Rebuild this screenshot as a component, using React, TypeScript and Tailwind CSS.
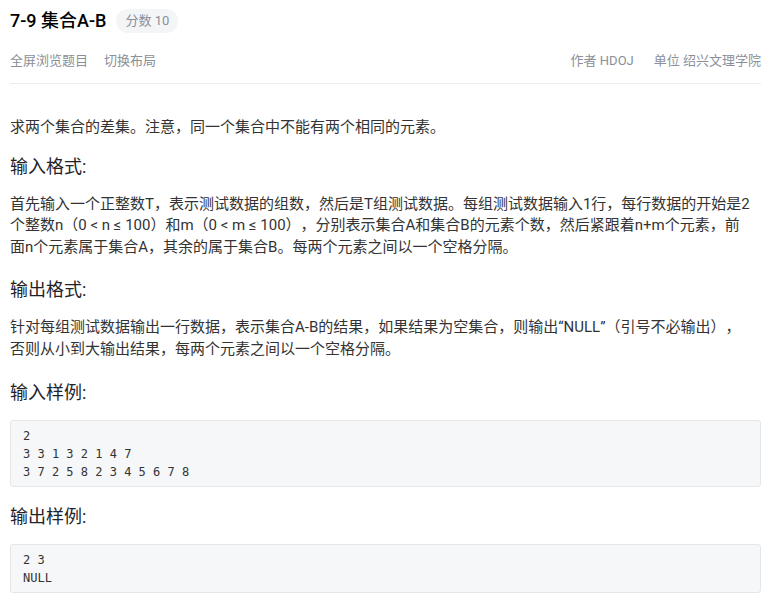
const sans = "font-['Roboto','Noto_Sans_CJK_SC',sans-serif]";

function Heading({ children, className }: { children: React.ReactNode; className: string }) {
  return (
    <h3 className={`text-[18px] leading-[26px] font-normal text-[#1f2329] mb-[14px] ${className}`}>
      {children}
    </h3>
  );
}

function Sample({ lines }: { lines: string[] }) {
  return (
    <pre className="bg-[#f6f7f9] border border-[#e5e6e8] rounded-[3px] px-[12px] py-[5.5px] font-['DejaVu_Sans_Mono',monospace] text-[12px] leading-[18px] text-[#333]">
      {lines.join("\n")}
    </pre>
  );
}

export default function App() {
  return (
    <div className={`${sans} bg-white min-h-screen pl-[10px] pr-[7px] text-[#333] [text-spacing-trim:space-all]`}>
      {/* Header */}
      <div className="flex items-center gap-[10px] pt-[9px]">
        <h1 className="text-[18px] leading-[24px] font-medium text-black">7-9 集合A-B</h1>
        <span className="bg-[#f4f5f7] rounded-full px-[9px] h-[24px] flex items-center text-[13px] text-[#8a8f99]">分数 10</span>
      </div>

      <div className="flex justify-between items-center mt-[18px] pb-[12px] border-b border-[#ebedf0] text-[13px] leading-[20px] text-[#8a8f99]">
        <div className="flex gap-[16px]">
          <span>全屏浏览题目</span>
          <span>切换布局</span>
        </div>
        <div className="flex gap-[20px]">
          <span>作者 HDOJ</span>
          <span>单位 绍兴文理学院</span>
        </div>
      </div>

      {/* Body */}
      <div className="text-[15px] leading-[21.5px] pt-[33px]">
        <p className="pr-[10px]">求两个集合的差集。注意，同一个集合中不能有两个相同的元素。</p>

        <Heading className="mt-[15px]">输入格式:</Heading>
        <p className="mt-[10px] pr-[11px]">
          首先输入一个正整数T，表示测试数据的组数，然后是T组测试数据。每组测试数据输入1行，每行数据的开始是2个整数n（0 &lt; n ≤ 100）和m（0 &lt; m ≤ 100），分别表示集合A和集合B的元素个数，然后紧跟着n+m个元素，前面n个元素属于集合A，其余的属于集合B。每两个元素之间以一个空格分隔。
        </p>

        <Heading className="mt-[19px]">输出格式:</Heading>
        <p className="mt-[12px] pr-[14px]">
          针对每组测试数据输出一行数据，表示集合A-B的结果，如果结果为空集合，则输出“NULL”（引号不必输出），否则从小到大输出结果，每两个元素之间以一个空格分隔。
        </p>

        <Heading className="mt-[20px]">输入样例:</Heading>
        <Sample lines={["2", "3 3 1 3 2 1 4 7", "3 7 2 5 8 2 3 4 5 6 7 8"]} />

        <Heading className="mt-[17px]">输出样例:</Heading>
        <Sample lines={["2 3", "NULL"]} />
      </div>
    </div>
  );
}
